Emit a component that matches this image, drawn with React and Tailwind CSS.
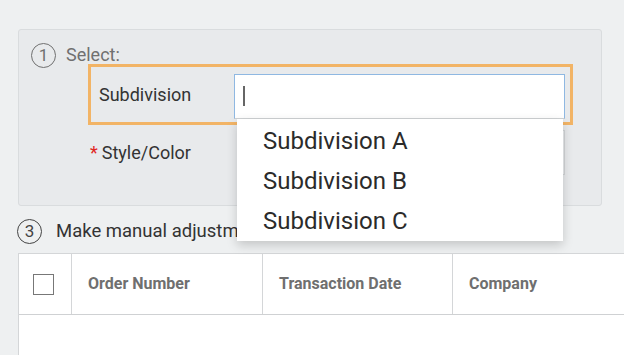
export default function App() {
  return (
    <div
      className="relative h-[355px] w-[624px] overflow-hidden bg-[#eef0f1] pl-[18px] pt-[29px]"
      style={{ fontFamily: 'Roboto, "Liberation Sans", sans-serif' }}
    >
      {/* Panel */}
      <div className="h-[177px] w-[584px] rounded-[3px] border border-[#d9dcde] bg-[#e8eaec] pl-[12px] pt-[13px]">
        <div className="flex h-[24px] items-center gap-[10px]">
          <div className="flex h-[25px] w-[25px] items-center justify-center rounded-full border-[1.5px] border-[#707070] text-[17px] leading-none text-[#707070]">
            1
          </div>
          <span className="text-[18px] leading-none text-[#707070]">Select:</span>
        </div>
        {/* Orange highlighted row */}
        <div className="relative ml-[57px] mt-[-3px] flex h-[61px] w-[485px] items-center border-[3px] border-[#f2b466] pl-[8px] pr-[5px]">
          <span className="w-[135px] text-[18px] leading-none text-[#333]">Subdivision</span>
          <div className="relative mt-[3px] flex h-[45px] w-[331px] items-center border border-[#8fb8e2] border-b-[#cfd2d4] bg-white pl-[8px]">
            <div className="h-[20px] w-[1.5px] bg-[#666]" />
            {/* Dropdown */}
            <div className="absolute left-[2px] top-[44px] z-20 w-[326px] bg-white pt-[2px] shadow-[0_4px_10px_rgba(0,0,0,0.18)]">
              {['Subdivision A', 'Subdivision B', 'Subdivision C'].map((t) => (
                <div key={t} className="flex h-[40px] items-center pl-[26px] text-[24px] leading-none text-[#2b2b2b]">
                  {t}
                </div>
              ))}
            </div>
          </div>
        </div>
        <div className="ml-[59px] mt-[5px] flex h-[45px] items-center">
          <span className="w-[147px] text-[18px] leading-none text-[#333]">
            <span className="mr-[4px] text-[#e0261f]">*</span>Style/Color
          </span>
          <div className="h-[45px] w-[328px] border border-[#d3d6d8] bg-[#eceef0]" />
        </div>
      </div>

      {/* Section 3 */}
      <div className="relative z-0 mt-[13px] flex h-[25px] items-center gap-[14px] -ml-[1px]">
        <div className="flex h-[25px] w-[25px] items-center justify-center rounded-full border-[1.5px] border-[#444] text-[17px] leading-none text-[#444]">
          3
        </div>
        <span className="text-[18.5px] leading-none text-[#333]">Make manual adjustments</span>
      </div>

      {/* Table */}
      <div className="relative z-0 mt-[9px] h-[200px] w-[700px] border border-[#d4d6d8] bg-white">
        <div className="flex h-[61px] border-b border-[#cfd1d3] text-[16px] font-bold text-[#6f6f6f]">
          <div className="flex w-[53px] items-center justify-center border-r border-[#d4d6d8] pr-[3px]">
            <div className="h-[21px] w-[21px] border border-[#777] bg-white" />
          </div>
          <div className="flex w-[191px] items-center border-r border-[#d4d6d8] pl-[16px]">Order Number</div>
          <div className="flex w-[190px] items-center border-r border-[#d4d6d8] pl-[16px]">Transaction Date</div>
          <div className="flex items-center pl-[16px]">Company</div>
        </div>
      </div>
    </div>
  );
}
